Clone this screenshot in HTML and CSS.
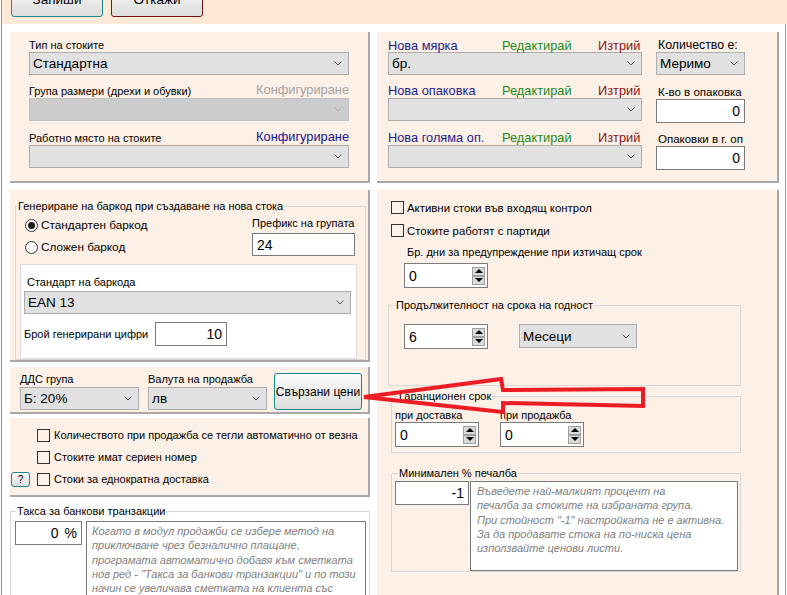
FILE: index.html
```html
<!DOCTYPE html>
<html lang="bg">
<head>
<meta charset="utf-8">
<title>Група стоки</title>
<link rel="stylesheet" href="styles.css">
</head>
<body>
<div class="app">
  <div class="topbar">
    <button class="btn btn-save">Запиши</button>
    <button class="btn btn-cancel">Откажи</button>
  </div>

  <div class="main">
    <div class="col-left">
      <section class="panel p-type">
        <div class="lbl">Тип на стоките</div>
        <div class="select"><span>Стандартна</span><svg class="chev" viewBox="0 0 8 5"><path d="M0.5 0.5L4 4L7.5 0.5"/></svg></div>
        <div class="hrow h23"><span class="lbl">Група размери (дрехи и обувки)</span><span class="cfg off">Конфигуриране</span></div>
        <div class="select disabled"><span></span><svg class="chev" viewBox="0 0 8 5"><path d="M0.5 0.5L4 4L7.5 0.5"/></svg></div>
        <div class="hrow h24"><span class="lbl">Работно място на стоките</span><span class="cfg">Конфигуриране</span></div>
        <div class="select"><span></span><svg class="chev" viewBox="0 0 8 5"><path d="M0.5 0.5L4 4L7.5 0.5"/></svg></div>
      </section>

      <section class="panel p-barcode">
        <fieldset class="gb gb-barcode">
          <legend>Генериране на баркод при създаване на нова стока</legend>
          <div class="gb-body bc-body">
            <div class="bc-top">
              <div class="radios">
                <div class="radio-row"><span class="rb on"></span><span>Стандартен баркод</span></div>
                <div class="radio-row"><span class="rb"></span><span>Сложен баркод</span></div>
              </div>
              <div class="prefix">
                <div class="lbl">Префикс на групата</div>
                <div class="input w-prefix">24</div>
              </div>
            </div>
            <div class="bc-std">
              <div class="lbl std-lbl">Стандарт на баркода</div>
              <div class="select sel-ean"><span>EAN 13</span><svg class="chev" viewBox="0 0 8 5"><path d="M0.5 0.5L4 4L7.5 0.5"/></svg></div>
              <div class="digits-row">
                <span class="lbl digits-lbl">Брой генерирани цифри</span>
                <div class="input r w-digits">10</div>
              </div>
            </div>
          </div>
        </fieldset>
      </section>

      <section class="panel p-vat">
        <div class="vat-field">
          <div class="lbl">ДДС група</div>
          <div class="select"><span>Б: 20%</span><svg class="chev" viewBox="0 0 8 5"><path d="M0.5 0.5L4 4L7.5 0.5"/></svg></div>
        </div>
        <div class="vat-field cur">
          <div class="lbl">Валута на продажба</div>
          <div class="select"><span>лв</span><svg class="chev" viewBox="0 0 8 5"><path d="M0.5 0.5L4 4L7.5 0.5"/></svg></div>
        </div>
        <button class="btn btn-linked">Свързани цени</button>
      </section>

      <section class="panel p-checks">
        <div class="chk-row"><span class="cb"></span><span>Количеството при продажба се тегли автоматично от везна</span></div>
        <div class="chk-row"><span class="cb"></span><span>Стоките имат сериен номер</span></div>
        <div class="chk-row help-row"><button class="btn btn-help">?</button><span class="cb"></span><span>Стоки за еднократна доставка</span></div>
      </section>

      <fieldset class="gb gb-bank">
        <legend>Такса за банкови транзакции</legend>
        <div class="gb-body bank-body">
          <div class="input r w-fee"><span>0</span><span class="pct">%</span></div>
          <div class="note note-bank">Когато в модул продажби се избере метод на<br>приключване чрез безналично плащане,<br>програмата автоматично добавя към сметката<br>нов ред - "Такса за банкови транзакции" и по този<br>начин се увеличава сметката на клиента със</div>
        </div>
      </fieldset>
    </div>

    <div class="col-right">
      <section class="panel p-units">
        <div class="units-left">
          <div class="uhead h14"><span class="nm">Нова мярка</span><span class="ed">Редактирай</span><span class="del">Изтрий</span></div>
          <div class="select"><span>бр.</span><svg class="chev" viewBox="0 0 8 5"><path d="M0.5 0.5L4 4L7.5 0.5"/></svg></div>
          <div class="uhead h23"><span class="nm">Нова опаковка</span><span class="ed">Редактирай</span><span class="del">Изтрий</span></div>
          <div class="select"><span></span><svg class="chev" viewBox="0 0 8 5"><path d="M0.5 0.5L4 4L7.5 0.5"/></svg></div>
          <div class="uhead h24"><span class="nm">Нова голяма оп.</span><span class="ed">Редактирай</span><span class="del">Изтрий</span></div>
          <div class="select"><span></span><svg class="chev" viewBox="0 0 8 5"><path d="M0.5 0.5L4 4L7.5 0.5"/></svg></div>
        </div>
        <div class="units-right">
          <div class="slbl qty-lbl h14">Количество е:</div>
          <div class="select"><span>Меримо</span><svg class="chev" viewBox="0 0 8 5"><path d="M0.5 0.5L4 4L7.5 0.5"/></svg></div>
          <div class="slbl h24">К-во в опаковка</div>
          <div class="input r">0</div>
          <div class="slbl h23">Опаковки в г. оп</div>
          <div class="input r">0</div>
        </div>
      </section>

      <section class="panel p-stock">
        <div class="chk-row stock-chk"><span class="cb"></span><span>Активни стоки във входящ контрол</span></div>
        <div class="chk-row stock-chk"><span class="cb"></span><span>Стоките работят с партиди</span></div>
        <div class="lbl days-lbl">Бр. дни за предупреждение при изтичащ срок</div>
        <div class="spin days-spin"><span>0</span><span class="spin-btns"><i class="up"></i><i class="dn"></i></span></div>

        <fieldset class="gb gb-shelf">
          <legend>Продължителност на срока на годност</legend>
          <div class="gb-body shelf-body">
            <div class="spin"><span>6</span><span class="spin-btns"><i class="up"></i><i class="dn"></i></span></div>
            <div class="select sel-months"><span>Месеци</span><svg class="chev" viewBox="0 0 8 5"><path d="M0.5 0.5L4 4L7.5 0.5"/></svg></div>
          </div>
        </fieldset>

        <fieldset class="gb gb-warranty">
          <legend>Гаранционен срок</legend>
          <div class="gb-body warranty-body">
            <div class="wcol">
              <div class="lbl wlbl">при доставка</div>
              <div class="spin"><span>0</span><span class="spin-btns"><i class="up"></i><i class="dn"></i></span></div>
            </div>
            <div class="wcol">
              <div class="lbl wlbl">при продажба</div>
              <div class="spin"><span>0</span><span class="spin-btns"><i class="up"></i><i class="dn"></i></span></div>
            </div>
          </div>
        </fieldset>

        <fieldset class="gb gb-profit">
          <legend>Минимален % печалба</legend>
          <div class="gb-body profit-body">
            <div class="input r w-profit">-1</div>
            <div class="note note-profit">Въведете най-малкият процент на<br>печалба за стоките на избраната група.<br>При стойност "-1" настройката не е активна.<br>За да продавате стока на по-ниска цена<br>използвайте ценови листи.</div>
          </div>
        </fieldset>
      </section>
    </div>
  </div>

  <svg class="arrow" width="787" height="595" viewBox="0 0 787 595">
    <polygon points="364,397 501,379 503,390 643,389 643,406 503,403 503,412" />
  </svg>
</div>
</body>
</html>
```

FILE: styles.css
```css
* { box-sizing: border-box; }
html, body { margin: 0; padding: 0; }
body {
  width: 787px;
  height: 595px;
  overflow: hidden;
  background: #fff;
  color: #000;
  font-family: "Liberation Sans", Arial, sans-serif;
  font-size: 11px;
}

.app {
  position: relative;
  height: 595px;
  background: linear-gradient(to right, #fff 0 1px, #8f8f8f 1px 2px, #fff 2px 785px, #9a9a9a 785px 786px, #fff 786px);
}

/* top bar */
.topbar {
  height: 24px;
  margin-left: 2px;
  background: #fee8d6;
  display: flex;
  align-items: flex-start;
  gap: 8px;
  padding-left: 9px;
}
.btn {
  font-family: "Liberation Sans", Arial, sans-serif;
  padding: 0;
  border: 1px solid #178a8a;
  border-radius: 3px;
  background: linear-gradient(#fdfdfd, #dcdcdc);
  color: #000;
  display: flex;
  align-items: center;
  justify-content: center;
  white-space: nowrap;
}
.btn-save, .btn-cancel {
  width: 92px;
  height: 36px;
  margin-top: -19px;
  font-size: 13.5px;
}
.btn-cancel { border-color: #7a1212; }

/* layout */
.main {
  display: flex;
  gap: 7px;
  padding: 8px 0 0 10px;
}
.col-left { width: 360px; display: flex; flex-direction: column; flex: none; }
.col-right { width: 402px; display: flex; flex-direction: column; flex: none; }

.panel {
  background: #fdf0e6;
  border-right: 2px solid #a8a8a8;
  border-bottom: 2px solid #a8a8a8;
  flex: none;
}

.lbl { font-size: 11px; line-height: 14px; white-space: nowrap; }

/* select */
.select {
  height: 23px;
  background: #e1e1e1;
  border: 1px solid #adadad;
  display: flex;
  align-items: center;
  justify-content: space-between;
  padding: 0 6px 0 3px;
  font-size: 13.5px;
  white-space: nowrap;
}
.select.disabled { background: #cccccc; border-color: #c2c2c2; }
.select.disabled .chev path { stroke: #a8a8a8; }
.chev { width: 8px; height: 5px; flex: none; }
.chev path { fill: none; stroke: #5a5a5a; stroke-width: 1; }

/* input */
.input {
  height: 24px;
  background: #fff;
  border: 1px solid #7a7a7a;
  display: flex;
  align-items: center;
  padding: 0 4px;
  font-size: 14px;
}
.input.r { justify-content: flex-end; }

.hrow { display: flex; justify-content: space-between; align-items: flex-end; }
.h14 { height: 14px; }
.h23 { height: 23px; }
.h24 { height: 24px; }
.cfg { font-size: 12.8px; line-height: 16px; color: #14148c; }
.cfg.off { color: #a3a3a3; }

/* panel 1 */
.p-type { height: 151px; padding: 6px 19px 0 19px; }

/* units panel */
.p-units { height: 151px; padding: 6px 0 0 11px; display: flex; gap: 14px; }
.units-left { width: 254px; }
.units-right { width: 89px; }
.uhead {
  display: grid;
  grid-template-columns: 114px 96px 1fr;
  align-items: end;
  font-size: 12.8px;
  line-height: 15px;
  white-space: nowrap;
}
.uhead .nm { color: #1c1c8e; }
.uhead .ed { color: #1d8a1d; }
.uhead .del { color: #8c1515; text-align: right; padding-right: 3px; }
.slbl { font-size: 11.5px; line-height: 14px; display: flex; align-items: flex-end; padding-left: 2px; white-space: nowrap; }
.qty-lbl { font-size: 12.3px; }

/* fieldset groupboxes */
.gb {
  border: 1px solid #d8d8d8;
  margin: 0;
  padding: 0;
  min-width: 0;
}
.gb legend {
  font-size: 11px;
  line-height: 14px;
  padding: 0 1px;
  white-space: nowrap;
}

/* barcode panel */
.p-barcode { height: 172px; margin-top: 7px; }
.gb-barcode { margin: 9px 2px 0 5px; }
.gb-barcode legend { margin-left: 1px; }
.bc-body { padding: 0 8px 0 4px; }
.bc-top { height: 50px; display: flex; justify-content: space-between; }
.radios { padding: 1px 0 0 5px; }
.radio-row { height: 22px; display: flex; align-items: center; gap: 3px; font-size: 11.8px; white-space: nowrap; }
.rb {
  width: 13px; height: 13px;
  border: 1px solid #333;
  border-radius: 50%;
  background: #fff;
  display: flex; align-items: center; justify-content: center;
  flex: none;
}
.rb.on::after { content: ""; width: 7px; height: 7px; border-radius: 50%; background: #1a1a1a; }
.prefix { width: 103px; margin-right: 2px; padding-top: 3px; }
.prefix .lbl { margin-bottom: 3px; }
.w-prefix { height: 23px; }
.bc-std {
  margin-top: 1px;
  height: 95px;
  background: #fff;
  border: 1px solid #dcdcdc;
  padding: 10px 5px 0 3px;
}
.std-lbl { margin-left: 3px; }
.sel-ean { margin-top: 2px; }
.digits-row { display: flex; align-items: center; margin-top: 8px; }
.digits-lbl { width: 131px; }
.w-digits { width: 72px; }

/* VAT panel */
.p-vat { height: 47px; margin-top: 5px; display: flex; align-items: flex-start; padding-left: 10px; }
.vat-field { width: 119px; padding-top: 5px; }
.vat-field .select { margin-top: 1px; }
.vat-field.cur { margin-left: 9px; }
.btn-linked { width: 88px; height: 37px; margin: 6px 0 0 7px; font-size: 12px; }

/* checks panel */
.p-checks { height: 79px; margin-top: 4px; padding-top: 6px; }
.chk-row { height: 22px; display: flex; align-items: center; gap: 4px; padding-left: 27px; font-size: 11px; white-space: nowrap; }
.cb { width: 13px; height: 13px; border: 1px solid #333; flex: none; }
.help-row { padding-left: 1px; }
.btn-help { width: 19px; height: 15px; font-size: 10px; margin-right: 3px; border-radius: 3px; }

/* bank fee */
.gb-bank { width: 360px; margin-top: 7px; }
.gb-bank legend { margin-left: 5px; }
.bank-body { display: flex; gap: 4px; padding: 3px 0 0 4px; }
.w-fee { width: 67px; height: 24px; gap: 6px; }
.pct { font-size: 14px; }
.note {
  background: #fff;
  border: 1px solid #7a7a7a;
  color: #808080;
  font-style: italic;
  font-size: 11px;
  line-height: 14.3px;
  white-space: nowrap;
  overflow: hidden;
}
.note-bank { width: 280px; height: 90px; padding: 2px 0 0 5px; }

/* stock panel */
.p-stock { height: 420px; margin-top: 7px; padding: 6px 0 0 11px; }
.stock-chk { padding-left: 3px; height: 23px; gap: 3px; font-size: 11.4px; }
.days-lbl { margin: 3px 0 0 19px; }
.spin {
  width: 84px;
  height: 25px;
  background: #fff;
  border: 1px solid #7a7a7a;
  display: flex;
  align-items: center;
  padding-left: 4px;
  font-size: 14px;
}
.days-spin { margin: 4px 0 0 16px; }
.spin-btns { margin-left: auto; margin-right: 2px; display: flex; flex-direction: column; }
.spin-btns i {
  width: 13px; height: 9px;
  background: #d9d9d9;
  border: 1px solid #a0a0a0;
  display: flex; align-items: center; justify-content: center;
}
.spin-btns .up::after { content: ""; border-left: 4px solid transparent; border-right: 4px solid transparent; border-bottom: 4px solid #000; }
.spin-btns .dn::after { content: ""; border-left: 4px solid transparent; border-right: 4px solid transparent; border-top: 4px solid #000; }

.gb-shelf { width: 353px; margin-top: 10px; }
.gb-shelf legend { margin-left: 6px; }
.shelf-body { display: flex; align-items: flex-start; padding: 12px 0 36px 15px; }
.sel-months { width: 118px; height: 24px; margin-left: 31px; }

.gb-warranty { width: 350px; margin: 3px 0 0 3px; }
.gb-warranty legend { margin-left: 6px; }
.warranty-body { display: flex; gap: 21px; padding: 6px 0 5px 3px; }
.wlbl { line-height: 13px; }

.gb-profit { width: 350px; margin: 13px 0 0 3px; }
.gb-profit legend { margin-left: 6px; }
.profit-body { display: flex; padding: 1px 0 0 3px; }
.w-profit { width: 74px; height: 24px; }
.note-profit { width: 268px; height: 90px; margin-left: 1px; padding: 2px 0 0 6px; }

/* annotation arrow overlay */
.arrow { position: absolute; left: 0; top: 0; pointer-events: none; }
.arrow polygon { fill: none; stroke: #ec1c24; stroke-width: 4; stroke-linejoin: miter; }
```
